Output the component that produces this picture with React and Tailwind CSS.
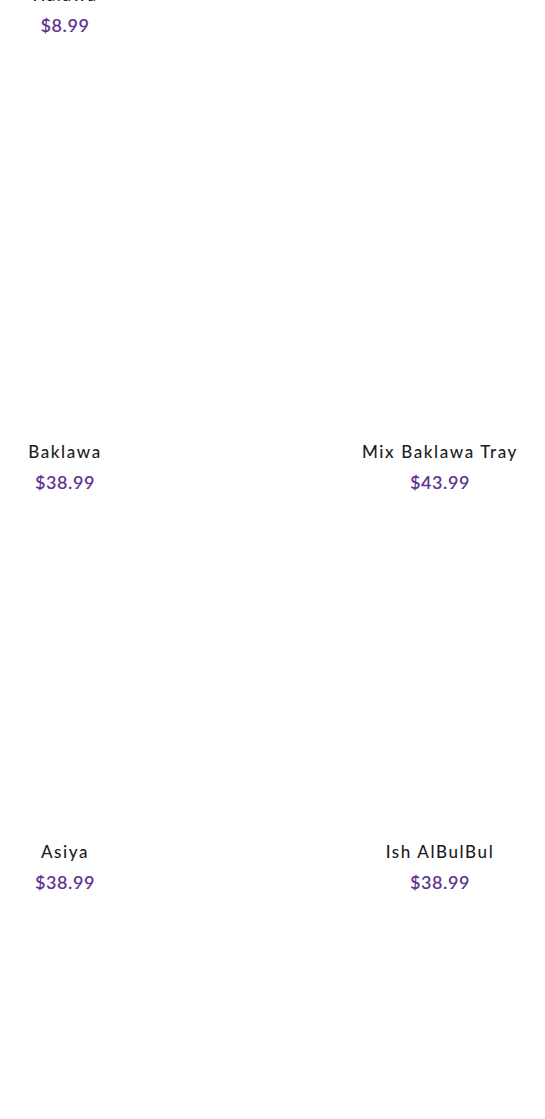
export default function App() {
  const Card = ({ title, price }) => (
    <div className="flex w-[130px] flex-col items-center">
      <div className="h-[30px] whitespace-nowrap text-[17px] font-medium leading-[30px] tracking-[1.6px] text-[#1f1d24]">{title}</div>
      <div className="h-[30px] whitespace-nowrap text-[18px] font-semibold leading-[30px] tracking-[0.6px] text-[#61358f]">{price}</div>
    </div>
  );
  return (
    <div className="h-[1119px] w-[545px] overflow-hidden bg-white font-['Lato','Noto_Sans',sans-serif]">
      <div className="mt-[-20px] grid grid-cols-[130px_130px] gap-x-[245px]">
        <Card title="Halawa" price="$8.99" />
        <div />
      </div>
      <div className="h-[397px]" />
      <div className="grid grid-cols-[130px_130px] gap-x-[245px]">
        <Card title="Baklawa" price="$38.99" />
        <Card title="Mix Baklawa Tray" price="$43.99" />
      </div>
      <div className="h-[340px]" />
      <div className="grid grid-cols-[130px_130px] gap-x-[245px]">
        <Card title="Asiya" price="$38.99" />
        <Card title="Ish AlBulBul" price="$38.99" />
      </div>
    </div>
  );
}
